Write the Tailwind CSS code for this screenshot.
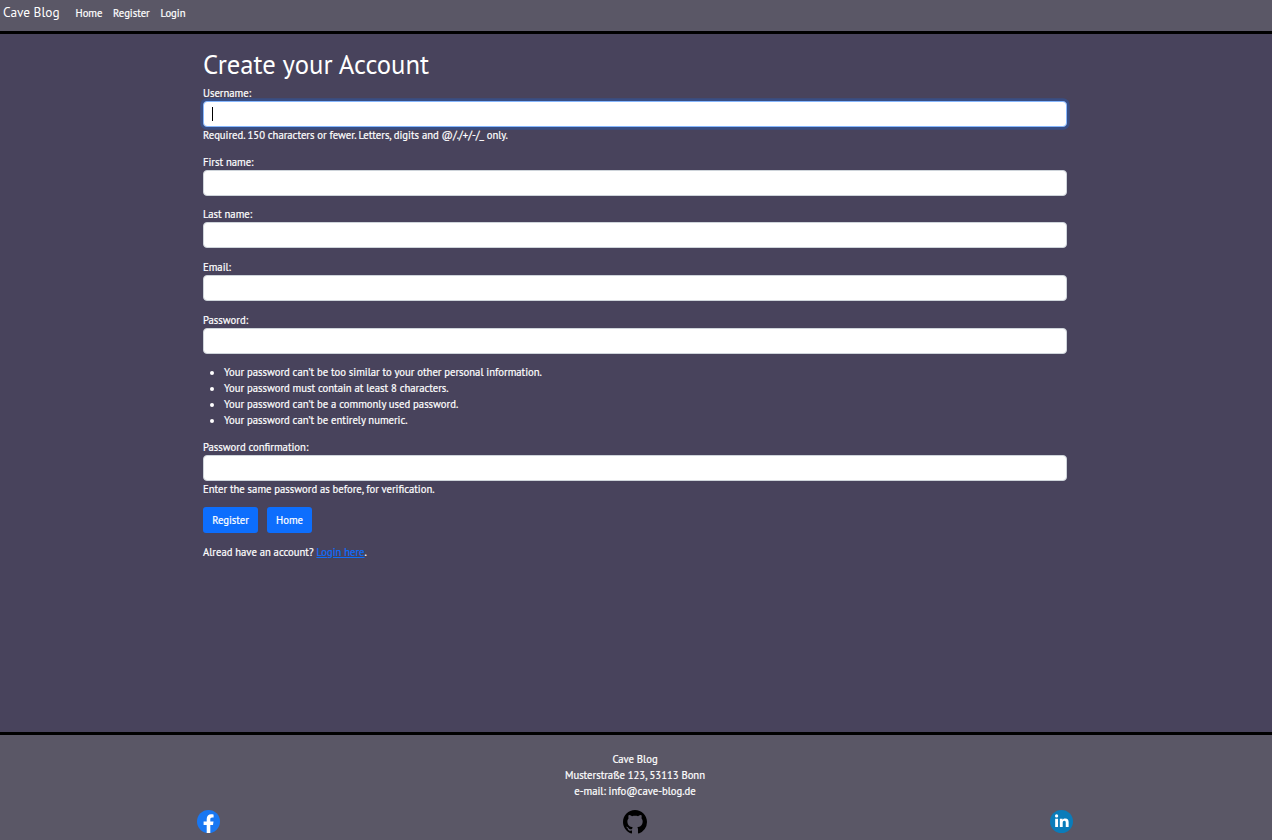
<!DOCTYPE html>
<html lang="en">
<head>
<meta charset="utf-8">
<title>Cave Blog</title>
<script src="https://cdn.jsdelivr.net/npm/@tailwindcss/browser@4"></script>
</head>
<body class="h-[840px] overflow-hidden flex flex-col bg-[#48435c] text-white text-[10.667px] leading-4 [-webkit-text-stroke:0.2px] font-['PT_Sans','Noto_Sans','Open_Sans',sans-serif]">
<nav class="h-[34px] shrink-0 bg-[#5a5766] border-b-3 border-black flex items-start pl-[3px]">
  <a class="text-[13.333px] leading-5 pt-[2px] w-[72.5px] whitespace-nowrap [-webkit-text-stroke:0]">Cave Blog</a>
  <a class="pt-[5px] w-[37.5px]">Home</a>
  <a class="pt-[5px] w-[47.5px]">Register</a>
  <a class="pt-[5px]">Login</a>
</nav>
<main class="flex-1 w-[864px] ml-[203px] pt-[14px] whitespace-nowrap">
  <h1 class="text-[26.667px] leading-8 mb-[5px] [-webkit-text-stroke:0]">Create your Account</h1>
  <form>
    <label class="block">Username:</label>
    <div class="h-[26px] rounded bg-white border border-[#86b7fe] shadow-[0_0_0_2.7px_rgba(13,110,253,0.25)] flex items-center pl-2"><i class="w-px h-3.5 bg-black"></i></div>
    <p class="mb-[11px]">Required. 150 characters or fewer. Letters, digits and @/./+/-/_ only.</p>
    <label class="block">First name:</label>
    <div class="h-[26px] mb-[10px] rounded bg-white border border-[#ced4da]"></div>
    <label class="block">Last name:</label>
    <div class="h-[26px] mb-[11px] rounded bg-white border border-[#ced4da]"></div>
    <label class="block">Email:</label>
    <div class="h-[26px] mb-[11px] rounded bg-white border border-[#ced4da]"></div>
    <label class="block">Password:</label>
    <div class="h-[26px] mb-[10px] rounded bg-white border border-[#ced4da]"></div>
    <ul class="mb-[11px]">
      <li class="flex items-center"><i class="size-1 rounded-full bg-white ml-[7px] mr-[10px] mt-px"></i>Your password can’t be too similar to your other personal information.</li>
      <li class="flex items-center"><i class="size-1 rounded-full bg-white ml-[7px] mr-[10px] mt-px"></i>Your password must contain at least 8 characters.</li>
      <li class="flex items-center"><i class="size-1 rounded-full bg-white ml-[7px] mr-[10px] mt-px"></i>Your password can’t be a commonly used password.</li>
      <li class="flex items-center"><i class="size-1 rounded-full bg-white ml-[7px] mr-[10px] mt-px"></i>Your password can’t be entirely numeric.</li>
    </ul>
    <label class="block">Password confirmation:</label>
    <div class="h-[26px] rounded bg-white border border-[#ced4da]"></div>
    <p class="mb-[10px]">Enter the same password as before, for verification.</p>
    <div class="flex gap-[9px] mb-[11px]">
      <button type="button" class="w-[55px] h-[26px] rounded-[3px] bg-[#0d6efd]">Register</button>
      <button type="button" class="w-[45px] h-[26px] rounded-[3px] bg-[#0d6efd]">Home</button>
    </div>
    <p>Alread have an account? <a class="text-[#0d6efd] underline">Login here</a>.</p>
  </form>
</main>
<footer class="h-[108px] shrink-0 bg-[#5a5766] border-t-3 border-black pt-4 text-center">
  <p class="pr-0.5">Cave Blog</p>
  <p class="pr-0.5">Musterstraße 123, 53113 Bonn</p>
  <p class="pr-0.5">e-mail: info@cave-blog.de</p>
  <div class="flex justify-between w-[877px] ml-[196px] mt-[11px]">
    <svg class="size-6" viewBox="0 0 24 24"><circle cx="12.5" cy="11.5" r="11.5" fill="#1877f2"/><path fill="#fff" d="M10.7 23v-8.1H7.6v-3.4h3.1V9c0-3 1.8-4.7 4.5-4.7.9 0 2 .2 2.4.3v2.9h-1.4c-1.5 0-1.9.9-1.9 1.8v2.2h3.2l-.5 3.4h-2.7V23z"/></svg>
    <svg class="size-6" viewBox="0 0 16 16"><path d="M8 0C3.58 0 0 3.58 0 8c0 3.54 2.29 6.53 5.47 7.59.4.07.55-.17.55-.38 0-.19-.01-.82-.01-1.49-2.01.37-2.53-.49-2.69-.94-.09-.23-.48-.94-.82-1.13-.28-.15-.68-.52-.01-.53.63-.01 1.08.58 1.23.82.72 1.21 1.87.87 2.33.66.07-.52.28-.87.51-1.07-1.78-.2-3.64-.89-3.64-3.95 0-.87.31-1.59.82-2.15-.08-.2-.36-1.02.08-2.12 0 0 .67-.21 2.2.82.64-.18 1.32-.27 2-.27s1.36.09 2 .27c1.53-1.04 2.2-.82 2.2-.82.44 1.1.16 1.92.08 2.12.51.56.82 1.27.82 2.15 0 3.07-1.87 3.75-3.65 3.95.29.25.54.73.54 1.48 0 1.07-.01 1.93-.01 2.2 0 .21.15.46.55.38A8.01 8.01 0 0 0 16 8c0-4.42-3.58-8-8-8"/></svg>
    <svg class="size-6" viewBox="0 0 24 24"><circle cx="12.5" cy="11.5" r="11.5" fill="#0a7cba"/><path fill="#fff" transform="translate(-.4 -1.2) scale(1.06)" d="M6.2 9.4h2.7v7.8H6.2zM6 6.7a1.5 1.5 0 1 1 3.1 0 1.5 1.5 0 0 1-3.1 0M10.6 9.4h2.6v1.1c.5-.8 1.4-1.3 2.5-1.3 2.4 0 3.2 1.5 3.2 3.7v4.3h-2.7v-4c0-1.1-.2-1.9-1.3-1.9s-1.6.7-1.6 1.9v4h-2.7z"/></svg>
  </div>
</footer>
</body>
</html>
